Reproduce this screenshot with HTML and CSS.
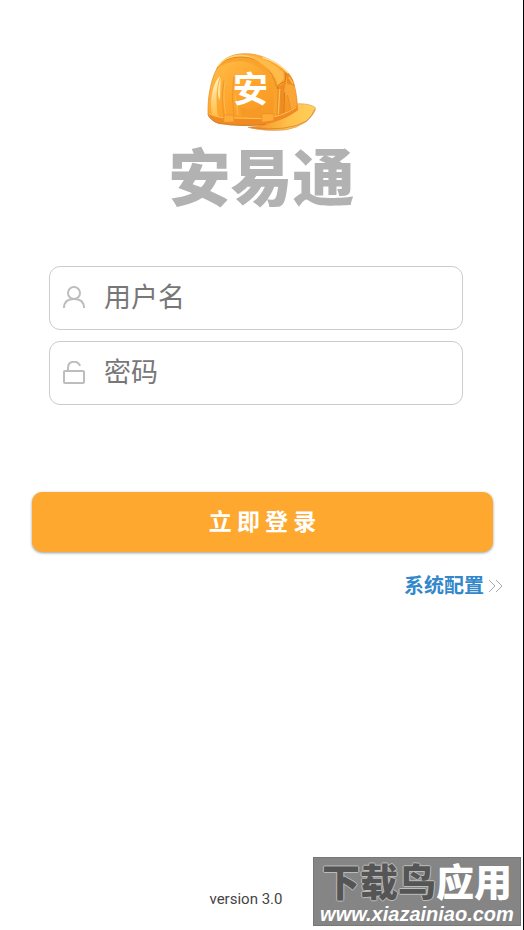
FILE: index.html
```html
<!DOCTYPE html>
<html lang="zh-CN">
<head>
  <meta charset="UTF-8">
  <meta name="viewport" content="width=device-width, initial-scale=1.0">
  <title>安易通</title>
  <link rel="stylesheet" href="styles.css">
</head>
<body>
  <div class="page">
    <header class="brand">
      <svg class="helmet" viewBox="0 0 405 285" role="img" aria-label="安">
        <defs>
          <linearGradient id="shell" x1="0" y1="0" x2="1" y2="1">
            <stop offset="0" stop-color="#ffc14d"/>
            <stop offset="0.45" stop-color="#ffa52b"/>
            <stop offset="1" stop-color="#f0901f"/>
          </linearGradient>
          <linearGradient id="brim" x1="0" y1="0" x2="1" y2="0">
            <stop offset="0" stop-color="#f18a1d"/>
            <stop offset="0.6" stop-color="#ffc04a"/>
            <stop offset="1" stop-color="#ffd05c"/>
          </linearGradient>
          <linearGradient id="shine" x1="0" y1="0" x2="0" y2="1">
            <stop offset="0" stop-color="#fff6c8"/>
            <stop offset="1" stop-color="#ffbd42"/>
          </linearGradient>
        </defs>
        <!-- brim -->
        <path d="M232 222L312 176Q350 176 364 188Q366 202 338 229Q310 249 278 254Q218 261 162 247Q210 244 232 222Z" fill="url(#brim)" stroke="#e09a50" stroke-width="2"/>
        <path d="M170 248Q282 261 338 228Q356 210 363 192" fill="none" stroke="#d07a30" stroke-width="2"/>
        <!-- shell -->
        <path d="M42 208C40 150 54 92 73 64C91 37 119 25 158 26C206 27 256 54 283 84C300 104 309 143 311 195Q282 218 247 227L214 238Q151 247 73 235Q47 225 42 208Z" fill="url(#shell)" stroke="#e58a30" stroke-width="2"/>
        <path d="M66 73Q93 38 140 37Q220 40 250 127L253 215L234 231Q246 149 228 107Q193 48 133 49Q95 50 66 73Z" fill="#f9a32d"/>
        <path d="M68 70Q92 36 140 36Q190 37 220 69Q239 91 248 128" fill="none" stroke="#e08c28" stroke-width="3"/>
        <path d="M71 64Q95 31 143 31Q210 35 243 87" fill="none" stroke="#ffd776" stroke-width="4"/>
        <path d="M159 31Q224 38 268 82L269 102L252 124Q244 72 159 31Z" fill="#ffbb4a"/>
        <path d="M206 37Q254 52 282 84" fill="none" stroke="#ffe2a1" stroke-width="4"/>
        <!-- side ridges -->
        <path d="M270 78L276 110L251 128L247 224L266 217L270 153L302 122Q299 96 270 78Z" fill="#ee8c20"/>
        <path d="M276 84L280 118Q301 114 304 136L309 194L290 205L279 157L270 143L275 114Z" fill="#fba536"/>
        <path d="M249 132Q253 112 273 111L276 84M272 142L269 217" fill="none" stroke="#d97a1e" stroke-width="3"/>
        <path d="M280 150L292 203" fill="none" stroke="#e68b28" stroke-width="3"/>
        <path d="M257 132L253 208M284 96L297 116" fill="none" stroke="#ffc059" stroke-width="4"/>
        <!-- left highlights -->
        <path d="M78 94C54 115 46 171 55 211L72 217C66 177 64 131 78 94Z" fill="url(#shine)"/>
        <path d="M81 96C69 123 69 157 78 165L80 99Z" fill="#ffe39a"/>
        <path d="M90 106Q80 166 91 215M119 96Q111 155 120 216" fill="none" stroke="#ec962b" stroke-width="3"/>
        <path d="M94 107Q85 160 96 211M124 151L132 211" fill="none" stroke="#ffbb50" stroke-width="3"/>
        <path d="M139 187Q176 204 203 180L204 216L143 215Z" fill="#f59a27"/>
        <!-- lower rim -->
        <path d="M43 205Q76 221 118 218L203 221Q264 216 310 181L311 195Q272 225 214 238Q132 246 73 235Q49 226 43 205Z" fill="#f18b20"/>
        <path d="M45 206Q77 222 119 219L203 221Q264 217 307 186" fill="none" stroke="#ffc159" stroke-width="3"/>
        <path d="M42 209Q54 231 76 235Q137 246 215 238" fill="none" stroke="#c8722c" stroke-width="2"/>
        <path d="M90 210L119 210L120 231L89 232ZM204 206L240 206L239 227L203 232Z" fill="#ffac36" stroke="#e68b28" stroke-width="2"/>
        <text class="helmet-text" x="169" y="171" text-anchor="middle">安</text>
      </svg>
      <h1 class="brand-name">安易通</h1>
    </header>

    <form class="login">
      <div class="fields">
        <div class="field">
          <label for="username" aria-label="用户名">
            <svg class="field-icon" viewBox="0 0 24 24">
              <circle cx="12" cy="7" r="6"/>
              <path d="M2 22C2 16 6 13 12 13S22 16 22 22"/>
            </svg>
          </label>
          <input type="text" id="username" placeholder="用户名">
        </div>
        <div class="field">
          <label for="password" aria-label="密码">
            <svg class="field-icon" viewBox="0 0 24 24">
              <rect x="2" y="10" width="20" height="12" rx="1"/>
              <path d="M6 10V7C6 -1 16 -1 18 5"/>
            </svg>
          </label>
          <input type="password" id="password" placeholder="密码">
        </div>
      </div>
      <button type="submit" class="login-btn">立 即 登 录</button>
      <a href="#" class="config">
        系统配置
        <svg class="arrows" viewBox="0 0 16 14">
          <path d="M1 1L7 7L1 13M8 1L14 7L8 13"/>
        </svg>
      </a>
    </form>

    <footer class="footer">
      <span class="version">version 3.0</span>
      <div class="watermark">
        <div class="mark-name">下载鸟<span>应用</span></div>
        <div class="mark-url">www.xiazainiao.com</div>
      </div>
    </footer>
  </div>
</body>
</html>
```

FILE: styles.css
```css
* {
    box-sizing: border-box;
}
body {
    margin: 0;
    background: #fff;
    font-family: Roboto, "Noto Sans CJK SC", sans-serif;
}
.page {
    display: flex;
    flex-direction: column;
    min-height: 100vh;
    padding-top: 45px;
    border-right: 1px solid #000;
}
.brand {
    display: flex;
    flex-direction: column;
    align-items: center;
}
.helmet {
    width: 135px;
    height: 95px;
}
.helmet-text {
    font-family: "Noto Sans CJK SC", sans-serif;
    font-size: 106px;
    font-weight: bold;
    fill: #fff;
}
.brand-name {
    margin: 0;
    font-family: "Noto Sans CJK SC", sans-serif;
    font-size: 62px;
    font-weight: 900;
    line-height: 68px;
    color: #b2b2b2;
}
.login {
    display: flex;
    flex-direction: column;
    padding: 58px 30px 0 32px;
}
.fields {
    display: flex;
    flex-direction: column;
    gap: 11px;
    margin: 0 30px 0 17px;
}
.field {
    display: flex;
    align-items: center;
    height: 64px;
    padding-left: 12px;
    border: 1px solid #ccc;
    border-radius: 11px;
}
.field label {
    display: flex;
}
.field-icon {
    width: 24px;
    height: 24px;
    fill: none;
    stroke: #bdbdbd;
    stroke-width: 2;
}
.field input {
    flex: 1;
    min-width: 0;
    height: 60px;
    margin-left: 18px;
    padding: 0 0 6px;
    border: 0;
    outline: 0;
    background: none;
    font-family: "Noto Sans CJK SC", sans-serif;
    font-size: 27px;
    color: #333;
}
.field input::placeholder {
    color: #777;
}
.login-btn {
    height: 60px;
    margin-top: 87px;
    padding-bottom: 6px;
    border: 0;
    border-radius: 10px;
    background: #ffa830;
    box-shadow: 0 1px 3px rgba(0, 0, 0, 0.4);
    font-family: "Noto Sans CJK SC", sans-serif;
    font-size: 23px;
    font-weight: bold;
    color: #fff;
}
.config {
    display: flex;
    align-items: center;
    align-self: flex-end;
    gap: 4px;
    margin: 19px -11px 0 0;
    font-size: 20px;
    font-weight: bold;
    line-height: 30px;
    color: #3388cc;
    text-decoration: none;
}
.arrows {
    width: 16px;
    height: 14px;
    fill: none;
    stroke: #aaa;
    stroke-width: 1;
}
.footer {
    position: relative;
    margin-top: auto;
    padding: 0 31px 21px 0;
    text-align: center;
}
.version {
    font-size: 15px;
    line-height: 20px;
    color: #444;
}
.watermark {
    position: absolute;
    right: 2px;
    bottom: 4px;
    width: 208px;
    height: 69px;
    padding-top: 4px;
    background: #858585;
    border: 1px solid #777;
    font-weight: bold;
    white-space: nowrap;
}
.mark-name {
    font-family: "Noto Sans CJK SC", sans-serif;
    font-size: 38px;
    font-weight: 900;
    line-height: 36px;
    color: #555;
    text-shadow: 1px 0 #bbb, -1px 0 #bbb, 0 1px #bbb, 0 -1px #bbb;
}
.mark-name span {
    color: #fff;
    text-shadow: none;
}
.mark-url {
    margin-top: 6px;
    font-family: "Liberation Sans", sans-serif;
    font-size: 20px;
    font-style: italic;
    line-height: 20px;
    color: #fff;
}
```
